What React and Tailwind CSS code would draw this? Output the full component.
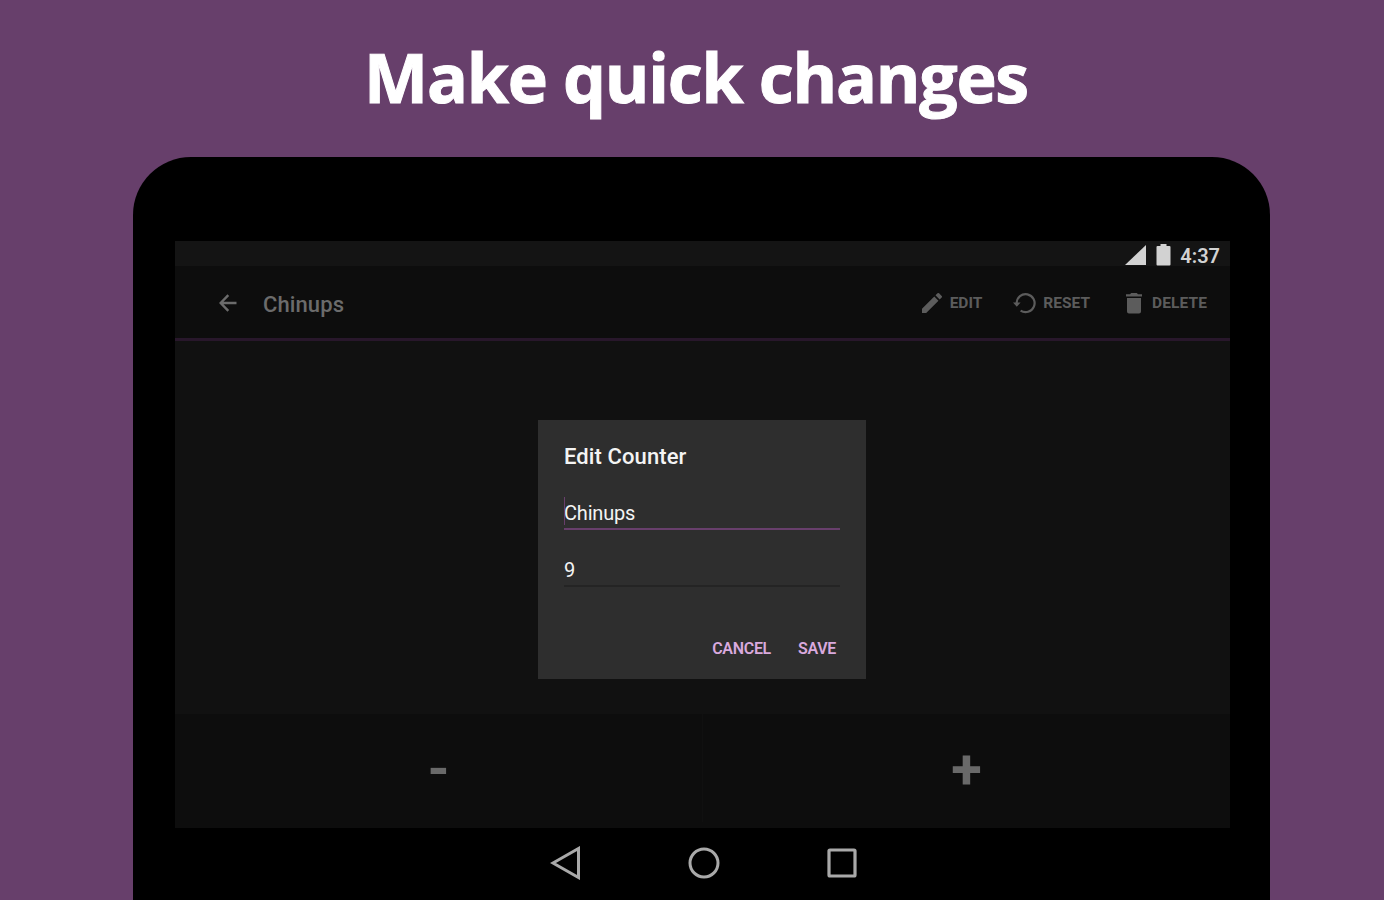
import React from "react";

function Action({ label, className, children }) {
  return (
    <button className={`flex items-center text-[15.5px] leading-4 font-bold text-[#5c5c5c] ${className}`}>
      {children}
      <span>{label}</span>
    </button>
  );
}

function StatusBar() {
  return (
    <div className="flex h-[25px] items-center justify-end bg-[#141414] pr-[10px] text-[#d2d2d2]">
      <svg className="mt-[3px]" width="21" height="20" viewBox="0 0 21 20" fill="currentColor">
        <path d="M0 20L21 0V20Z" />
      </svg>
      <svg className="mt-[3px] ml-[10px]" width="15" height="22" viewBox="0 0 15 22" fill="currentColor">
        <path d="M4.500 0h6v2H13.500q1 0 1 1V20.500q0 1-1 1H1.500q-1 0-1-1V3q0-1 1-1H4.500Z" />
      </svg>
      <span className="ml-[9px] mt-[5px] text-[20px] leading-5 font-semibold">4:37</span>
    </div>
  );
}

function AppBar() {
  return (
    <div className="flex h-[75px] items-center border-b-[3px] border-[#28172b] bg-[#0d0d0d] pt-[2px] pr-[23px] pl-[44px] text-[#6b6b6b]">
      <svg width="18" height="18" viewBox="0 0 18 18" fill="none" stroke="currentColor" strokeWidth="2.400">
        <path d="M17.500 9H2M9.300 1.200L1.700 9L9.300 16.800" />
      </svg>
      <h1 className="ml-[26px] pt-[3px] text-[22px] leading-6 font-medium tracking-[0.1px]">Chinups</h1>
      <div className="ml-auto flex items-center">
        <Action label="EDIT" className="gap-[8px]">
          <svg width="20" height="20" viewBox="3 3 18 18" fill="currentColor">
            <path d="M3 17.250V21h3.750L17.810 9.940l-3.750-3.750L3 17.250zM20.710 7.040a1 1 0 0 0 0-1.410l-2.340-2.340a1 1 0 0 0-1.410 0l-1.830 1.830 3.750 3.750 1.830-1.830z" />
          </svg>
        </Action>
        <Action label="RESET" className="ml-[31px] gap-[7px]">
          <svg width="23" height="22" viewBox="0 0 23 22" fill="none">
            <path d="M3.600 11A9 9 0 1 1 7.600 18.600" stroke="currentColor" strokeWidth="2.200" />
            <path d="M0 10.500H7.600L3.800 14.700Z" fill="currentColor" />
          </svg>
        </Action>
        <Action label="DELETE" className="ml-[36px] gap-[10px] tracking-[0.1px]">
          <svg width="16" height="21" viewBox="0 0 16 21" fill="currentColor">
            <path d="M0 1.300H4L5.200 0H10.800L12 1.300H16V3.500H0ZM1 5H15V18.500q0 2-2 2H3q-2 0-2-2Z" />
          </svg>
        </Action>
      </div>
    </div>
  );
}

function EditDialog() {
  return (
    <div className="absolute top-[179px] left-[363px] h-[259px] w-[328px] bg-[#2e2e2e] px-[26px] pt-[24px] text-[#f4f4f4]">
      <h2 className="text-[22px] leading-[26px] font-medium tracking-[0.1px]">Edit Counter</h2>
      <div className="relative mt-[25px] h-[35px] border-b-2 border-[#683f6c] pt-[6px] text-[20px] leading-6 tracking-[-0.2px]">
        Chinups
        <span className="absolute top-[2px] left-0 h-7 w-px bg-[#683f6c]" />
      </div>
      <div className="mt-[26px] h-[31px] border-b-2 border-[#242424] pt-[2px] text-[20px] leading-6">9</div>
      <div className="mt-[52px] flex justify-end gap-[27px] pr-[4px] text-base leading-5 font-semibold tracking-[-0.3px] text-[#d9a9de]">
        <button>CANCEL</button>
        <button>SAVE</button>
      </div>
    </div>
  );
}

export default function App() {
  return (
    <div className="flex h-[900px] w-[1384px] flex-col overflow-hidden bg-[#673f6b] font-['Roboto',sans-serif]">
      <div className="flex h-[157px] shrink-0 justify-center pt-[32px] pl-[8px]">
        <h1 className="font-['Open_Sans',sans-serif] text-[68px] leading-[90px] font-bold tracking-[-1.25px] whitespace-nowrap text-white [-webkit-text-stroke:1px_white]">
          Make quick changes
        </h1>
      </div>
      <div className="ml-[133px] flex h-[743px] w-[1137px] flex-col rounded-t-[58px] bg-black px-[42px] pt-[84px]">
        <div className="relative flex h-[587px] w-[1055px] flex-col bg-[#111111]">
          <StatusBar />
          <AppBar />
          <div className="flex-1" />
          <div className="flex h-[114px] bg-[#0d0d0d] pb-[6px] text-[56px] leading-[110px] font-bold text-[#696969]">
            <button className="flex-1 border-r border-[#101010]">-</button>
            <button className="flex-1">+</button>
          </div>
          <EditDialog />
        </div>
        <div className="flex h-[70px] items-center justify-center gap-[106px] pl-[5px] text-[#a9a9a9]">
          <svg width="32" height="34" viewBox="0 0 32 34" fill="none" stroke="currentColor" strokeWidth="3">
            <path d="M3 17L28.500 2.500V31.500Z" />
          </svg>
          <svg width="32" height="32" viewBox="0 0 32 32" fill="none" stroke="currentColor" strokeWidth="3">
            <circle cx="16" cy="16" r="14" />
          </svg>
          <svg width="32" height="32" viewBox="0 0 32 32" fill="none" stroke="currentColor" strokeWidth="3.200">
            <rect x="3" y="3" width="26" height="26" rx="1" />
          </svg>
        </div>
      </div>
    </div>
  );
}
